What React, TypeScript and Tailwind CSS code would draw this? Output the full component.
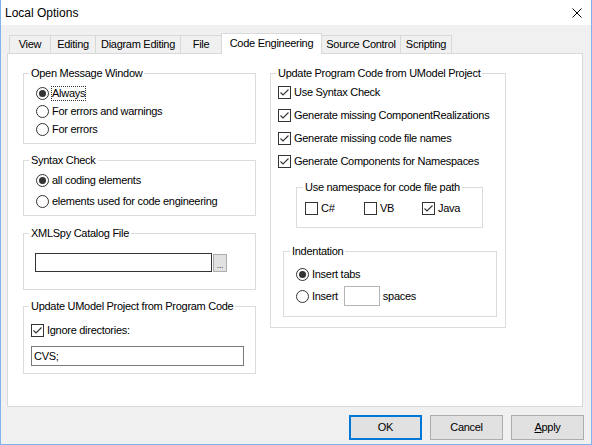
import React from "react";

function Radio({ checked }: { checked?: boolean }) {
  return (
    <span className="w-[13px] h-[13px] rounded-full border border-[#333333] bg-white flex items-center justify-center shrink-0">
      {checked && <span className="w-[7px] h-[7px] rounded-full bg-[#333333]" />}
    </span>
  );
}

function Check({ checked }: { checked?: boolean }) {
  return (
    <span className="w-[13px] h-[13px] border border-[#333333] bg-white flex items-center justify-center shrink-0">
      {checked && (
        <svg width="11" height="11" viewBox="0 0 11 11">
          <path d="M1.5 5.5 L4 8 L9.5 2.5" stroke="#333333" strokeWidth="1.1" fill="none" />
        </svg>
      )}
    </span>
  );
}

function RadioRow({ label, checked, focus }: { label: string; checked?: boolean; focus?: boolean }) {
  return (
    <div className="flex items-center h-[18px] gap-[3px]">
      <Radio checked={checked} />
      <span className={focus ? "outline outline-1 outline-dotted outline-[#333] leading-[13px]" : ""}>{label}</span>
    </div>
  );
}

function CheckRow({ label, checked }: { label: string; checked?: boolean }) {
  return (
    <div className="flex items-center h-[18px] gap-[3px]">
      <Check checked={checked} />
      <span>{label}</span>
    </div>
  );
}

function Legend({ children, inner }: { children: React.ReactNode; inner?: boolean }) {
  return (
    <legend className={(inner ? "ml-[6px]" : "ml-[5px]") + " px-[2px] leading-[14px]"}>{children}</legend>
  );
}

const tabs = [
  { label: "View", w: "w-[42px]" },
  { label: "Editing", w: "w-[46px]" },
  { label: "Diagram Editing", w: "w-[86px]" },
  { label: "File", w: "w-[42px]" },
  { label: "Code Engineering", w: "w-[101px]", active: true },
  { label: "Source Control", w: "w-[80px]" },
  { label: "Scripting", w: "w-[52px]" },
];

export default function App() {
  return (
    <div
      className="w-[592px] h-[445px] border-l border-r border-b border-[#7eb4ea] bg-[#f0f0f0] flex flex-col text-[11px] tracking-[-0.28px] text-black overflow-hidden"
      style={{ fontFamily: '"Liberation Sans", Arial, sans-serif' }}
    >
      {/* Title bar */}
      <div className="h-[25px] bg-white flex items-center justify-between shrink-0">
        <span className="ml-[4px] text-[12px] tracking-normal">Local Options</span>
        <svg width="10" height="10" viewBox="0 0 10 10" className="mr-[9px]">
          <path d="M0.5 0.5 L9.5 9.5 M9.5 0.5 L0.5 9.5" stroke="#000" strokeWidth="1" />
        </svg>
      </div>

      {/* Tabs */}
      <div className="flex items-end h-[20px] mt-[8px] pl-[8px]">
        {tabs.map((t, i) =>
          t.active ? (
            <div
              key={t.label}
              className={`${t.w} h-[21px] -mb-px -ml-px relative z-10 bg-white border-t border-l border-r border-[#d9d9d9] flex items-center justify-center pb-[1px]`}
            >
              {t.label}
            </div>
          ) : (
            <div
              key={t.label}
              className={`${t.w} h-[18px] ${i === 0 ? "" : "-ml-px"} bg-[#f0f0f0] border-t border-l border-r border-[#d9d9d9] flex items-center justify-center`}
            >
              {t.label}
            </div>
          )
        )}
      </div>

      {/* Panel */}
      <div className="ml-[6px] w-[576px] h-[354px] border border-[#d9d9d9] bg-white flex">
        {/* Left column */}
        <div className="ml-[15px] w-[233px] flex flex-col">
          <fieldset className="mt-[12px] h-[78px] border border-[#dcdcdc] min-w-0">
            <Legend>Open Message Window</Legend>
            <div className="pl-[12px] pt-[4px] flex flex-col">
              <RadioRow label="Always" checked focus />
              <RadioRow label="For errors and warnings" />
              <RadioRow label="For errors" />
            </div>
          </fieldset>

          <fieldset className="mt-[9px] h-[63px] border border-[#dcdcdc] min-w-0">
            <Legend>Syntax Check</Legend>
            <div className="pl-[12px] pt-[4px] flex flex-col gap-[3px]">
              <RadioRow label="all coding elements" checked />
              <RadioRow label="elements used for code engineering" />
            </div>
          </fieldset>

          <fieldset className="mt-[10px] h-[64px] border border-[#dcdcdc] min-w-0">
            <Legend>XMLSpy Catalog File</Legend>
            <div className="pl-[11px] pt-[13px] flex items-start">
              <div className="w-[177px] h-[19px] border border-[#333333] bg-white" />
              <div className="ml-[1px] mt-[1px] w-[14px] h-[18px] border border-[#adadad] bg-[#e1e1e1] flex items-end justify-center text-[9px] leading-[12px] text-[#444]">
                ...
              </div>
            </div>
          </fieldset>

          <fieldset className="mt-[9px] h-[75px] border border-[#dcdcdc] min-w-0">
            <Legend>Update UModel Project from Program Code</Legend>
            <div className="pl-[7px] pt-[8px] flex flex-col">
              <CheckRow label="Ignore directories:" checked />
              <div className="mt-[7px] w-[213px] h-[20px] border border-[#7a7a7a] bg-white flex items-center pl-[2px]">
                CVS;
              </div>
            </div>
          </fieldset>
        </div>

        {/* Right column */}
        <div className="ml-[14px] w-[236px] flex flex-col">
          <fieldset className="mt-[12px] h-[262px] border border-[#dcdcdc] min-w-0">
            <Legend>Update Program Code from UModel Project</Legend>
            <div className="pl-[7px] pt-[3px] flex flex-col gap-[5px]">
              <CheckRow label="Use Syntax Check" checked />
              <CheckRow label="Generate missing ComponentRealizations" checked />
              <CheckRow label="Generate missing code file names" checked />
              <CheckRow label="Generate Components for Namespaces" checked />
            </div>

            <fieldset className="mt-[10px] ml-[25px] w-[187px] h-[48px] border border-[#dcdcdc] min-w-0">
              <Legend inner>Use namespace for code file path</Legend>
              <div className="pl-[8px] pt-[5px] flex">
                <div className="w-[59px]">
                  <CheckRow label="C#" />
                </div>
                <div className="w-[58px]">
                  <CheckRow label="VB" />
                </div>
                <div>
                  <CheckRow label="Java" checked />
                </div>
              </div>
            </fieldset>

            <fieldset className="mt-[16px] ml-[12px] w-[214px] h-[73px] border border-[#dcdcdc] min-w-0">
              <Legend inner>Indentation</Legend>
              <div className="pl-[12px] pt-[7px] flex flex-col gap-[4px]">
                <RadioRow label="Insert tabs" checked />
                <div className="flex items-center h-[18px]">
                  <Radio />
                  <span className="ml-[3px]">Insert</span>
                  <div className="ml-[6px] w-[36px] h-[20px] border border-[#b4b4b4] bg-white" />
                  <span className="ml-[3px]">spaces</span>
                </div>
              </div>
            </fieldset>
          </fieldset>
        </div>
      </div>

      {/* Buttons */}
      <div className="flex justify-end gap-[8px] mt-[8px] pr-[7px]">
        <div className="w-[73px] h-[25px] border-2 border-[#0078d7] bg-[#e1e1e1] flex items-center justify-center">
          OK
        </div>
        <div className="w-[73px] h-[25px] border border-[#adadad] bg-[#e1e1e1] flex items-center justify-center">
          Cancel
        </div>
        <div className="w-[73px] h-[25px] border border-[#adadad] bg-[#e1e1e1] flex items-center justify-center">
          <span>
            <span className="underline">A</span>pply
          </span>
        </div>
      </div>
    </div>
  );
}
